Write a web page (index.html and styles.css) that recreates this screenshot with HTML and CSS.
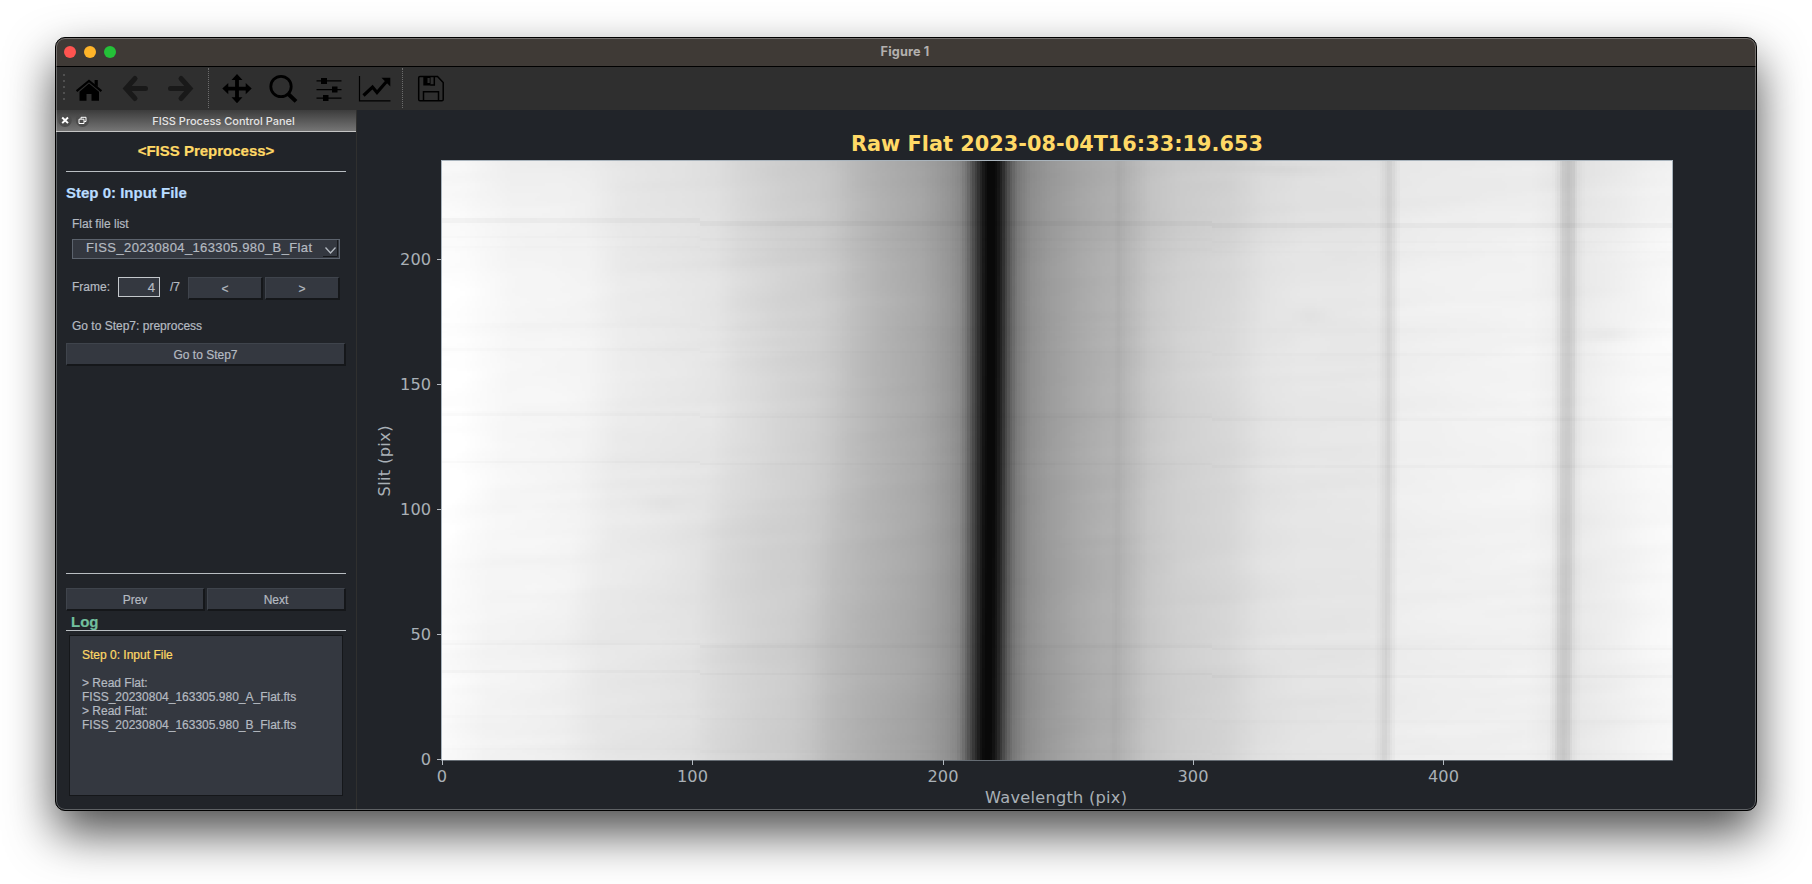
FILE: index.html
```html
<!DOCTYPE html>
<html lang="en">
<head>
<meta charset="utf-8">
<title>Figure 1</title>
<link rel="stylesheet" href="styles.css">
</head>
<body>
<div class="window">
  <header class="titlebar">
    <div class="lights"><i class="light red"></i><i class="light amber"></i><i class="light green"></i></div>
    <span class="window-title">Figure 1</span>
  </header>

  <nav class="toolbar">
    <svg class="handle" viewBox="57 67 9 43"><path d="M64 74v26" stroke="#505050" stroke-width="2" stroke-dasharray="2 4"/></svg>
    <svg class="tool" viewBox="66 67 46 43"><path d="M76.6 91.2 89 81l12.4 10.2" fill="none" stroke="#000" stroke-width="2.2"/><path d="M94.6 80h3.2v7l-3.2-2.7zM89 83.6l10 8.2v9H91.5V94h-5v6.8H79.5v-9z"/></svg>
    <svg class="tool off" viewBox="112 67 46 43"><path d="M135 78.500 126 88.500 135 98.500M127 88.500H145.500" /></svg>
    <svg class="tool off" viewBox="158 67 46 43"><path d="M181 78.500 190 88.500 181 98.500M189 88.500H170.500" /></svg>
    <i class="sep"></i>
    <svg class="tool" viewBox="214 67 46 43"><path d="M237 74l5.500 6h-3.600v6.700h6.800V83l6 5.600-6 5.600v-3.700h-6.800v6.800h3.600l-5.500 6-5.500-6h3.600v-6.800h-6.800v3.700l-6-5.600 6-5.600v3.700h6.800V80h-3.600z"/></svg>
    <svg class="tool" viewBox="260 67 46 43"><g fill="none" stroke="#000"><circle cx="281" cy="86.500" r="10.200" stroke-width="2.800"/><path d="M288 93.800l8 7.600" stroke-width="4"/></g></svg>
    <svg class="tool" viewBox="306 67 46 43"><path d="M316.500 80.800h25M316.500 89.600h25M316.500 98.200h25" stroke="#000" stroke-width="1.200"/><path d="M321 78h6v6h-6zM332 86.500h5.500v6H332zM323 95h5.500v6H323z"/></svg>
    <svg class="tool" viewBox="352 67 46 43"><path d="M359.500 76v24.800h31" fill="none" stroke="#000" stroke-width="1.200"/><path d="M363.500 95.500l9-8.500 4.500 5.500 10-11.500" fill="none" stroke="#000" stroke-width="3.200"/><path d="M381.500 77.800h8.800v8.600z"/></svg>
    <i class="sep"></i>
    <svg class="tool" viewBox="408 67 46 43"><g fill="none" stroke="#000" stroke-width="1.500"><path d="M420 76.500h17.500l5.700 6V99.500q0 1.300-1.300 1.300H420q-1.300 0-1.300-1.300V77.800q0-1.300 1.300-1.300z"/><path d="M423.500 101v-9.300h15V101M434.300 77v8h-4"/></g><path d="M423.300 76.500h7.300v9h-7.300z"/><path d="M427.500 78h2.200v5h-2.200z" fill="#2f2f2f"/></svg>
  </nav>

  <div class="content">
    <aside class="panel">
      <div class="dock">
        <svg class="dock-btns" viewBox="57 110 36 21"><circle cx="65" cy="120.300" r="6.700" fill="#4c4c4c"/><circle cx="82.500" cy="120.300" r="6.700" fill="#4c4c4c"/><path d="M62.200 117.500l5.800 5.600M68 117.500l-5.800 5.600" stroke="#fff" stroke-width="2"/><path d="M81 119v-1.700h5v4.200h-1.800M79 119.200h5v4.300h-5z" fill="none" stroke="#fff"/></svg>
        <span class="dock-title">FISS Process Control Panel</span>
      </div>
      <div class="panel-body">
        <h1 class="heading"><span>&lt;FISS Preprocess&gt;</span></h1>
        <h2 class="step">Step 0: Input File</h2>
        <div class="label">Flat file list</div>
        <div class="combo"><span>FISS_20230804_163305.980_B_Flat</span><svg viewBox="0 0 15 17"><path d="M0 16.500h14.500V0" fill="none" stroke="#16181b"/><path d="M2.500 7.500l5 5.500 5-5.500" fill="none" stroke="#b4bac1" stroke-width="1.300"/></svg></div>
        <div class="frame"><span class="frame-label">Frame:</span><span class="field">4</span><span class="total">/7</span><button class="btn">&lt;</button><button class="btn">&gt;</button></div>
        <div class="label goto">Go to Step7: preprocess</div>
        <button class="btn wide">Go to Step7</button>
        <div class="spacer"></div>
        <div class="nav"><button class="btn">Prev</button><button class="btn">Next</button></div>
        <div class="log-title">Log</div>
        <div class="log"><span class="log-step">Step 0: Input File</span><br><br>&gt; Read Flat:<br>FISS_20230804_163305.980_A_Flat.fts<br>&gt; Read Flat:<br>FISS_20230804_163305.980_B_Flat.fts</div>
      </div>
    </aside>

    <main class="plot">
      <svg class="axes" viewBox="357 110 1398 699">
        <text class="plot-title" x="851" y="150.500" textLength="412">Raw Flat 2023-08-04T16:33:19.653</text>
        <rect x="441.500" y="160.500" width="1231" height="599.500" fill="none" stroke="#a9b4bd"/>
        <path d="M437 759.500h5M437 634.500h5M437 509.500h5M437 384.500h5M437 259.500h5M442.500 760v5M692.500 760v5M943.500 760v5M1193.500 760v5M1443.500 760v5" stroke="#b4bac1"/>
        <g class="tick" text-anchor="end"><text x="431" y="765">0</text><text x="431" y="640">50</text><text x="431" y="515">100</text><text x="431" y="390">150</text><text x="431" y="265">200</text></g>
        <g class="tick" text-anchor="middle"><text x="442" y="782">0</text><text x="692.500" y="782">100</text><text x="943" y="782">200</text><text x="1193" y="782">300</text><text x="1443.500" y="782">400</text><text x="1056" y="803" textLength="142">Wavelength (pix)</text><text transform="translate(389.500 461) rotate(-90)" textLength="71">Slit (pix)</text></g>
      </svg>
      <canvas class="raster" id="raster" width="492" height="240"></canvas>
    </main>
  </div>
</div>
<script src="plot.js"></script>
</body>
</html>
```
FILE: plot.js
```js
// Grey level of the flat frame along the wavelength axis: [x offset in px, level]
const profile = [[0,255],[22,254],[38,251],[68,246],[113,245],[145,243],[180,235],[240,231],[273,228],[298,220],[340,211],[375,206],[393,200],[412,190],[435,181],[458,174],[478,168],[493,160],[508,150],[518,139],[524,118],[529,90],[534,62],[538,40],[542,20],[546,9],[552,9],[556,22],[560,42],[564,70],[569,98],[575,122],[588,143],[608,156],[638,169],[663,177],[671,178],[676,174],[684,182],[708,199],[738,208],[788,215],[823,226],[858,230],[918,231],[935,232],[942,222],[947,211],[953,228],[958,239],[1008,241],[1088,243],[1110,239],[1116,226],[1120,208],[1126,201],[1131,208],[1135,226],[1143,235],[1178,241],[1208,247],[1231,250]];
// Horizontal dust lines: [y offset in px at the left edge, depth, width]
const streaks = [[60,11,1.2],[253,6,.9],[301,5,.9],[483,7,.9],[511,6,.8],[557,3,.8],[588,3,.8],[76,3,.8],[87,3,.8],[165,3,.8],[189,3,.8]];
// Soft blobs: [x, y, radius x, radius y, depth]
const blobs = [[868,155,18,8,6],[840,9,45,6,7],[1165,174,22,7,5],[220,344,18,8,4],[290,390,60,60,3],[310,270,50,60,-3],[780,190,70,60,-3],[450,560,60,40,3],[1180,250,40,80,-4]];

function level(x) {
  if (x <= 0) return profile[0][1];
  for (let i = 1; i < profile.length; i++) {
    const [x1, v1] = profile[i];
    if (x <= x1) {
      const [x0, v0] = profile[i - 1];
      return v0 + (v1 - v0) * (x - x0) / (x1 - x0);
    }
  }
  return profile[profile.length - 1][1];
}
function hash(a, b) {
  const s = Math.sin(a * 127.1 + b * 311.7) * 43758.5453;
  return s - Math.floor(s) - .5;
}
function noise(x, y) {
  const xi = Math.floor(x), yi = Math.floor(y), f = x - xi, g = y - yi;
  const u = f * f * (3 - 2 * f), v = g * g * (3 - 2 * g);
  const a = hash(xi, yi) * (1 - u) + hash(xi + 1, yi) * u;
  const b = hash(xi, yi + 1) * (1 - u) + hash(xi + 1, yi + 1) * u;
  return a * (1 - v) + b * v;
}
const canvas = document.getElementById('raster');
const ctx = canvas.getContext('2d');
const image = ctx.createImageData(492, 240);
for (let r = 0; r < 240; r++) {
  const y = r * 2.5 + 1.25, t = y / 600;
  const s = Math.min(1, Math.max(0, (t - .3) / .55));
  const drift = 22 * s * s * (3 - 2 * s);
  for (let c = 0; c < 492; c++) {
    const x = c * 2.5 + 1.25;
    const w = Math.min(1, Math.max(0, (490 - x) / 100));
    const bend = (3.3 + x / 1231 * 2) * t * t - .3;
    let v = level(x + bend + drift * w);
    const gain = v / 255;
    // darker band above the first dust line, and towards the bottom edge
    v -= gain * 8 * Math.max(0, 1 - t / .22) + gain * 6 * Math.max(0, t - .6) * 1.8;
    v += gain * (noise(x / 110, (y + x * .05) / 9) * 3 + noise(x / 160 + 30, (y + x * .18) / 22) * 3.5 + noise(x / 30, y / 12 + 80) * 1.5);
    for (const [sy, depth, width] of streaks) {
      const d = (y - sy - Math.round(x / 1231 * 2.4) * 2.5) / 2.5 / width;
      if (Math.abs(d) < 2) v -= gain * depth * Math.exp(-d * d * 2);
    }
    for (const [bx, by, rx, ry, depth] of blobs) {
      const q = ((x - bx) / rx) ** 2 + ((y - by) / ry) ** 2;
      if (q < 6) v -= depth * Math.exp(-q);
    }
    const k = (r * 492 + c) * 4;
    image.data[k] = image.data[k + 1] = image.data[k + 2] = v;
    image.data[k + 3] = 255;
  }
}
ctx.putImageData(image, 0, 0);
```
FILE: styles.css
```css
* { box-sizing: border-box; }
body { margin: 0; height: 884px; padding: 37px 55px; background: #fff; overflow: hidden; font-family: "Liberation Sans", Arial, sans-serif; }
.window { width: 1702px; height: 774px; border: 1px solid #000; border-radius: 10px; background: #212429; overflow: hidden; box-shadow: 0 22px 48px rgba(0,0,0,.7); position: relative; }
.window::after { content: ""; position: absolute; inset: 0; border: 1px solid rgba(255,255,255,.28); border-radius: 9px; pointer-events: none; }
.titlebar { height: 29px; background: #3f3a36; border-bottom: 1px solid #000; display: grid; grid-template-columns: 1fr auto 1fr; align-items: center; }
.lights { display: flex; gap: 8px; padding-left: 8px; }
.light { width: 12px; height: 12px; border-radius: 50%; }
.red { background: #ff5450; }
.amber { background: #ffb429; }
.green { background: #24c138; }
.window-title { font: 700 12.7px Inter, sans-serif; color: #b3b0ae; padding: 0 2px 1px 0; letter-spacing: .15px; }
.toolbar { height: 43px; background: #2f2f2f; display: flex; padding-left: 1px; }
.handle { width: 9px; height: 43px; }
.tool { width: 46px; height: 43px; }
.off path { fill: none; stroke: #191919; stroke-width: 5; stroke-linecap: round; }
.sep { width: 2px; height: 40px; margin: 1px 4px 0; border-left: 1px dotted #6c6c6c; }
.content { display: flex; height: 700px; }
.panel { width: 301px; padding-left: 0; border-right: 1px solid #30302f; display: flex; flex-direction: column; }
.dock { height: 22px; background: linear-gradient(#3c3c3c, #757575); border-bottom: 1px solid #c4c4c4; display: flex; align-items: center; }
.dock-btns { width: 36px; height: 21px; margin-left: 1px; }
.dock-title { flex: 1; text-align: center; font: 500 11px Inter, sans-serif; color: #e4e4e4; padding-right: 2px; }
.panel-body { flex: 1; display: flex; flex-direction: column; padding: 0 10px; color: #b4bac1; font-size: 12px; -webkit-text-stroke: .2px currentColor; }
.heading { margin: 0; height: 40px; border-bottom: 1px solid #b9bec2; font-size: 15px; line-height: 38px; text-align: center; color: #ffd966; }
.step { margin: 0; height: 42px; font-size: 15px; line-height: 42px; color: #b9dcff; }
.label { margin-left: 6px; height: 25px; line-height: 20px; }
.combo { margin: 0 6px 0 6px; height: 20px; background: #343840; border: 1px solid #5c636d; display: flex; justify-content: space-between; padding-left: 13px; font-size: 13px; line-height: 16px; letter-spacing: .38px; }
.combo svg { width: 15px; height: 17px; margin-right: 1px; }
.frame { display: flex; margin: 18px 6px 0 6px; height: 23px; line-height: 20px; }
.frame-label { width: 46px; }
.field { width: 42px; height: 20px; border: 1px solid #c4c8cc; background: #343840; text-align: right; padding-right: 4px; font-size: 13px; line-height: 19px; }
.total { width: 28px; padding-left: 10px; }
.btn { flex: 1; height: 23px; padding: 1px 0 0; background: #343840; border: 1px solid; border-color: #3f444c #15171a #15171a #3f444c; border-width: 1px 2px 2px 1px; font: 12px "Liberation Sans", Arial, sans-serif; color: #b4bac1; -webkit-text-stroke: .2px currentColor; }
.btn + .btn { margin-left: 2px; }
.goto { margin-top: 16px; height: 27px; }
.wide { flex: none; width: 280px; }
.spacer { flex: 1; border-bottom: 1px solid #b9bec2; }
.nav { display: flex; margin-top: 14px; width: 280px; }
.log-title { height: 20px; border-bottom: 1px solid #b9bec2; padding-left: 5px; font-size: 15px; font-weight: 700; line-height: 22px; color: #72bf9d; }
.log { margin: 4px 3px 14px; height: 161px; background: #343840; border: 1px solid #15171a; padding: 12px 12px; line-height: 14px; white-space: nowrap; }
.log-step { color: #ffd966; }
.plot { position: relative; width: 1398px; height: 699px; }
.axes { display: block; width: 1398px; height: 699px; }
.axes text { font-family: "DejaVu Sans", sans-serif; }
.axes .plot-title { font-size: 20.8px; font-weight: 700; fill: #ffd966; }
.tick { font-size: 16.2px; fill: #a9b0b6; }
.raster { position: absolute; left: 85px; top: 51px; width: 1230px; height: 599px; image-rendering: pixelated; }
```
